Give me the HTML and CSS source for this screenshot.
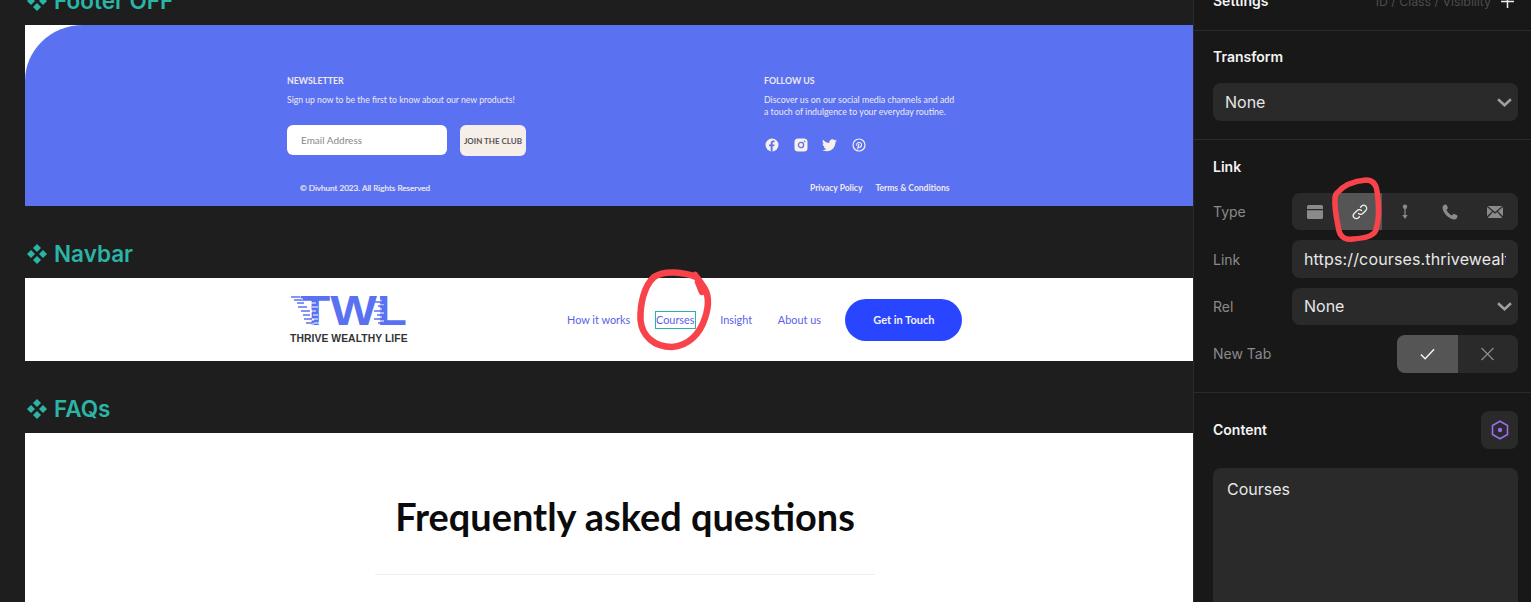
FILE: index.html
```html
<!DOCTYPE html>
<html lang="en">
<head>
<meta charset="utf-8">
<title>Link settings</title>
<link rel="stylesheet" href="styles.css">
</head>
<body>
<div class="app">
  <main class="canvas">
    <section class="block">
      <h2 class="label"><svg class="gem" viewBox="0 0 20 20"><path d="M10 0l4 4-4 4-4-4zM4 6l4 4-4 4-4-4zM16 6l4 4-4 4-4-4zM10 12l4 4-4 4-4-4z"/></svg>Footer OFF</h2>
      <div class="frame footer-frame">
        <div class="footer">
          <div class="foot-grid">
            <div class="foot-col">
              <h4 class="foot-title">NEWSLETTER</h4>
              <p class="foot-text">Sign up now to be the first to know about our new products!</p>
              <div class="sub">
                <div class="email">Email Address</div>
                <div class="join">JOIN THE CLUB</div>
              </div>
              <div class="copy">© Divhunt 2023. All Rights Reserved</div>
            </div>
            <div class="foot-col">
              <h4 class="foot-title">FOLLOW US</h4>
              <p class="foot-text foot-text-wide">Discover us on our social media channels and add<br>a touch of indulgence to your everyday routine.</p>
              <div class="social">
                <svg viewBox="0 0 14 14"><circle cx="7" cy="7" r="6.5" fill="#f8f0ea"/><path d="M7.6 13.4V8.3h1.6l.3-1.9H7.6V5.3c0-.6.3-1 1-1h1V2.700c-.4-.1-.9-.1-1.400-.1-1.500 0-2.500.9-2.500 2.500v1.300H4v1.900h1.700v5.100z" fill="#5a72f2"/></svg>
                <svg viewBox="0 0 14 14"><rect x=".5" y=".5" width="13" height="13" rx="3.500" fill="#f8f0ea"/><circle cx="7" cy="7" r="2.600" fill="none" stroke="#5a72f2" stroke-width="1.300"/><circle cx="10.600" cy="3.400" r=".8" fill="#5a72f2"/></svg>
                <svg class="tw" viewBox="0 0 24 20"><path d="M24 2.400c-.9.400-1.800.7-2.800.8 1-.6 1.800-1.600 2.200-2.700-1 .6-2 1-3.100 1.200C19.300.7 18 0 16.600 0c-2.700 0-4.900 2.200-4.900 4.900 0 .4 0 .8.100 1.100C7.700 5.800 4.100 3.900 1.700.900c-.4.700-.7 1.600-.7 2.500 0 1.700.9 3.200 2.200 4.100-.8 0-1.600-.2-2.200-.6v.1c0 2.400 1.700 4.400 3.900 4.800-.4.100-.8.200-1.300.2-.3 0-.6 0-.9-.1.600 2 2.400 3.400 4.600 3.400-1.700 1.300-3.800 2.100-6.100 2.100-.4 0-.8 0-1.200-.1C2.200 18.300 4.800 19.100 7.500 19.100c9.100 0 14-7.500 14-14v-.6c1-.7 1.800-1.500 2.500-2.100z" fill="#f8f0ea"/></svg>
                <svg viewBox="0 0 14 14"><circle cx="7" cy="7" r="6" fill="none" stroke="#f8f0ea" stroke-width="1.200"/><path d="M5.600 11.500l1.300-5.700M5 7.800c-.8-1.500.2-3.300 2.100-3.300 1.600 0 2.500 1 2.400 2.400-.1 1.500-1 2.400-2 2.400-.5 0-.9-.2-1.100-.6" fill="none" stroke="#f8f0ea" stroke-width="1.100"/></svg>
              </div>
              <div class="legal"><span>Privacy Policy</span><span>Terms &amp; Conditions</span></div>
            </div>
          </div>
        </div>
      </div>
    </section>

    <section class="block">
      <h2 class="label"><svg class="gem" viewBox="0 0 20 20"><path d="M10 0l4 4-4 4-4-4zM4 6l4 4-4 4-4-4zM16 6l4 4-4 4-4-4zM10 12l4 4-4 4-4-4z"/></svg>Navbar</h2>
      <div class="frame nav-frame">
        <div class="logo">
          <svg class="logo-mark" viewBox="0 0 117 32">
            <text x="10" y="29" class="logo-letters" textLength="107" lengthAdjust="spacingAndGlyphs">TWL</text>
            <g class="streaks-white">
              <path d="M8 3h5M8 6h3M8 9h8M8 12h12M8 16h14M8 20h14M8 24h16M8 28h16M21 7h5M22 11h6M20 15h6M23 19h5M22 23h6M24 27h5M89 5h3M89 9h5M89 13h3M89 17h5M89 21h3M89 25h5"/>
            </g>
            <g class="streaks-blue">
              <path d="M1 1h9M4 4h7M7 7h7M8 11h9M11 15h9M13 19h7M14 23h8M16 27h6M90 1h5M85 6h7M88 10h6M84 15h8M87 19h7M84 23h8M88 27h7"/>
            </g>
          </svg>
          <div class="logo-name">THRIVE WEALTHY LIFE</div>
        </div>
        <nav class="links">
          <a class="link">How it works</a>
          <a class="link link-on">Courses</a>
          <a class="link">Insight</a>
          <a class="link">About us</a>
        </nav>
        <div class="touch">Get in Touch</div>
      </div>
    </section>

    <section class="block">
      <h2 class="label"><svg class="gem" viewBox="0 0 20 20"><path d="M10 0l4 4-4 4-4-4zM4 6l4 4-4 4-4-4zM16 6l4 4-4 4-4-4zM10 12l4 4-4 4-4-4z"/></svg>FAQs</h2>
      <div class="frame faq-frame">
        <h1 class="faq-title">Frequently asked questions</h1>
        <div class="faq-rule"></div>
        <div class="faq-q">What is Thrive Wealthy Life?</div>
      </div>
    </section>
  </main>

  <aside class="panel">
    <section class="group group-settings">
      <div class="head-row">
        <h3 class="head">Settings</h3>
        <span class="hint">ID / Class / Visibility</span>
        <svg class="plus" viewBox="0 0 14 14"><path d="M7 0v14M0 7h14"/></svg>
      </div>
    </section>
    <section class="group group-transform">
      <h3 class="head">Transform</h3>
      <div class="field select wide"><span>None</span><svg class="chev" viewBox="0 0 14 8"><path d="M1 1l6 5.500L13 1"/></svg></div>
    </section>
    <section class="group group-link">
      <h3 class="head">Link</h3>
      <div class="rows">
        <div class="row">
          <span class="row-name">Type</span>
          <div class="field types">
            <span class="type"><svg viewBox="0 0 16 14"><path d="M1.500 0h13A1.500 1.500 0 0 1 16 1.500V4H0V1.500A1.500 1.500 0 0 1 1.500 0zM0 5.200h16v7.300a1.500 1.500 0 0 1-1.500 1.500h-13A1.500 1.500 0 0 1 0 12.500z" fill="#8a8a8a"/></svg></span>
            <span class="type type-on"><svg viewBox="0 0 16 16"><path d="M6.500 9.500a3 3 0 0 0 4.300 0l3-3a3 3 0 0 0-4.300-4.300l-1 1M9.500 6.500a3 3 0 0 0-4.300 0l-3 3a3 3 0 0 0 4.300 4.300l1-1" fill="none" stroke="#f0f0f0" stroke-width="1.300" stroke-linecap="round"/></svg></span>
            <span class="type"><svg viewBox="0 0 8 18"><circle cx="4" cy="3" r="2.500" fill="#8a8a8a"/><path d="M4 3v11" stroke="#8a8a8a" stroke-width="1.400"/><path d="M1 12.500h6L4 17z" fill="#8a8a8a"/></svg></span>
            <span class="type"><svg viewBox="0 0 16 16"><path d="M3.600.500c.5 0 1 .3 1.200.8l1 2.300c.2.500.1 1-.3 1.400L4.400 5.800c.7 2 3.300 4.800 5.500 5.700l1.100-1.200c.4-.4 1-.5 1.400-.3l2.300 1c.5.200.8.700.8 1.200 0 1.500-1.400 3.300-3 3.300C7 15.500.500 8.500.500 3.500.500 2 2 .500 3.600.500z" fill="#8a8a8a"/></svg></span>
            <span class="type"><svg viewBox="0 0 17 13"><path d="M.800 0h15.400L8.500 6.500zM0 1.200l5.400 4.500L0 11zM17 1.200v9.800l-5.400-5.300zM6.300 6.500l2.200 1.800 2.200-1.800 5.700 6.500H.600z" fill="#8a8a8a"/></svg></span>
          </div>
        </div>
        <div class="row">
          <span class="row-name">Link</span>
          <div class="field url"><span class="url-text">https://courses.thrivewealthylife.com</span></div>
        </div>
        <div class="row">
          <span class="row-name">Rel</span>
          <div class="field select rel"><span>None</span><svg class="chev" viewBox="0 0 14 8"><path d="M1 1l6 5.500L13 1"/></svg></div>
        </div>
        <div class="row">
          <span class="row-name">New Tab</span>
          <div class="field toggle">
            <span class="tog tog-on"><svg viewBox="0 0 16 12"><path d="M1 6.500L5.500 11 15 1" fill="none" stroke="#f5f5f5" stroke-width="1.600"/></svg></span>
            <span class="tog"><svg viewBox="0 0 14 14"><path d="M1 1l12 12M13 1L1 13" fill="none" stroke="#8a8a8a" stroke-width="1.300"/></svg></span>
          </div>
        </div>
      </div>
    </section>
    <section class="group group-content">
      <div class="content-row">
        <h3 class="head">Content</h3>
        <span class="hex"><svg viewBox="0 0 18 20"><path d="M9 1.200l7.500 4.300v9L9 18.800l-7.500-4.300v-9z" fill="none" stroke="#9a6cf0" stroke-width="1.600"/><circle cx="9" cy="10" r="2.200" fill="#9a6cf0"/></svg></span>
      </div>
      <div class="text-area">Courses</div>
    </section>
  </aside>

  <svg class="scribble scribble-nav" viewBox="630 260 90 100"><path d="M696 277C684 272 664 270 654 277C644 286 640 304 640.500 320C642 336 654 347 672 347C688 346 700 334 705 318C709 306 709 294 703 286C701 283 698 279 695 275M698 282L702 292"/></svg>
  <svg class="scribble scribble-type" viewBox="1325 170 65 80"><path d="M1337 193C1343 186 1354 181 1366 180C1373 180 1376 184 1377 191C1379 204 1379 220 1376 230C1373 237 1364 238 1353 239C1347 240 1341 238 1339 231C1337 220 1334 208 1335 199C1335 196 1336 194 1337 193"/></svg>
</div>
</body>
</html>
```
FILE: styles.css
```css
* { box-sizing: border-box; }
html, body { margin: 0; height: 602px; overflow: hidden; background: #1e1e1e; }
body { font-family: "Inter", "Liberation Sans", sans-serif; }
h1, h2, h3, h4, p { margin: 0; }

.app { position: relative; display: flex; width: 1531px; height: 602px; overflow: hidden; }

/* canvas */
.canvas {
  flex: 0 0 1193px;
  height: 602px;
  padding-left: 25px;
  margin-top: -14px;
  overflow: visible;
}
.block { margin-bottom: 33px; }
.label {
  display: flex;
  align-items: center;
  gap: 7px;
  height: 30px;
  margin-bottom: 9px;
  font-size: 22.500px;
  font-weight: 600;
  line-height: 30px;
  color: #2bb5a6;
}
.gem { width: 20px; height: 20px; margin-left: 2px; fill: #2bb5a6; }
.frame { width: 1168px; background: #fff; font-family: "Lato", "Noto Sans", sans-serif; }

/* footer */
.footer-frame { height: 181px; }
.footer { height: 100%; padding: 50px 0 0 262px; background: #5a72f2; border-top-left-radius: 58px 56px; color: #f0e9ec; }
.foot-grid { display: grid; grid-template-columns: 477px 210px; }
.foot-title { font-size: 8.800px; font-weight: 700; line-height: 12px; margin-bottom: 7px; }
.foot-text { font-size: 8.650px; line-height: 12px; font-weight: 400; white-space: nowrap; }
.foot-text-wide { font-size: 8.800px; }
.sub { display: flex; gap: 13px; margin-top: 19px; }
.email { width: 160px; height: 30px; padding-left: 14px; background: #fff; border-radius: 6px; color: #888; font-size: 10px; line-height: 31px; }
.join { width: 66px; height: 31px; background: #f6eee8; border-radius: 6px; color: #555; font-size: 8px; font-weight: 700; line-height: 33px; text-align: center; white-space: nowrap; }
.copy { margin: 26px 0 0 13px; font-size: 8.100px; font-weight: 400; line-height: 12px; -webkit-text-stroke: .2px #f0e9ec; white-space: nowrap; }
.social { display: flex; align-items: center; gap: 14.700px; margin: 20px 0 0 1px; height: 14px; }
.social svg { width: 14px; height: 14px; }
.social .tw { width: 15px; height: 13px; }
.legal { display: flex; gap: 13px; margin: 30px 0 0 46px; font-size: 8.500px; font-weight: 700; line-height: 12px; white-space: nowrap; }

/* navbar */
.nav-frame { display: flex; align-items: center; height: 82.500px; padding: 1px 0 0 265px; }
.logo { width: 118px; margin-right: 159px; padding-top: 1px; }
.logo-mark { display: block; width: 117px; height: 32px; margin-bottom: 5px; overflow: visible; }
.logo-letters { font-family: "Liberation Sans", sans-serif; font-weight: 700; font-size: 43px; fill: #5a72f2; }
.streaks-blue path { stroke: #5a72f2; stroke-width: 1.500; fill: none; }
.streaks-white path { stroke: #fff; stroke-width: 1.200; fill: none; }
.logo-name { font-family: "Liberation Sans", sans-serif; font-size: 10.300px; font-weight: 700; line-height: 11px; color: #333; white-space: nowrap; letter-spacing: .1px; }
.links { display: flex; align-items: center; gap: 25.700px; }
.link { font-size: 10.900px; line-height: 16px; color: #5a62e8; white-space: nowrap; }
.link-on { outline: 1px solid #2bb5a6; }
.touch { width: 117px; height: 42px; margin-left: 24.300px; border-radius: 21px; background: #2a45ff; color: #f2f2f2; font-size: 11px; font-weight: 700; line-height: 42px; text-align: center; }

/* faq */
.faq-frame { height: 200px; padding: 60px 0 0 350px; }
.faq-title { width: 500px; font-size: 37.900px; font-weight: 700; line-height: 48px; color: #0b0b0b; text-align: center; white-space: nowrap; }
.faq-rule { width: 500px; height: 1px; margin-top: 33px; background: #efefef; }
.faq-q { margin-top: 22px; padding-left: 6px; font-size: 16px; line-height: 24px; color: #222; }

/* panel */
.panel { flex: 0 0 338px; height: 602px; background: #181818; border-left: 1px solid #2a2a2a; color: #fff; }
.group { padding: 0 13px 0 19px; border-bottom: 1px solid #2b2b2b; }
.group-settings { height: 31px; }
.head-row { display: flex; align-items: center; height: 2px; }
.head { font-size: 14px; font-weight: 600; line-height: 20px; color: #f4f4f4; }
.hint { margin-left: auto; font-size: 12.300px; color: #4c4c4c; white-space: nowrap; }
.plus { width: 13px; height: 13px; margin: 0 4px 0 10px; fill: none; stroke: #eee; stroke-width: 1.600; }
.group-transform { height: 109px; padding-top: 16px; }
.field { display: flex; align-items: center; background: #2a2a2a; border-radius: 8px; }
.select { justify-content: space-between; padding: 0 6px 0 12px; font-size: 16px; color: #e6e6e6; }
.wide { height: 38px; margin-top: 16px; }
.chev { width: 15px; height: 9px; fill: none; stroke: #a0a0a0; stroke-width: 2.400; }
.group-link { height: 253px; padding-top: 17px; }
.rows { display: flex; flex-direction: column; gap: 10px; margin-top: 16px; }
.row { display: flex; align-items: center; justify-content: space-between; height: 37.400px; }
.row-name { font-size: 14px; color: #8a8a8a; }
.types { width: 226px; height: 37px; justify-content: space-between; }
.type { display: flex; align-items: center; justify-content: center; width: 45.200px; height: 37px; }
.type svg { width: 16px; height: 16px; }
.type-on { background: #555; }
.url { width: 226px; height: 38px; padding: 0 12px; overflow: hidden; }
.url-text { display: block; width: 100%; overflow: hidden; white-space: nowrap; font-size: 16px; letter-spacing: .15px; color: #e8e8e8; }
.rel { width: 226px; height: 37px; }
.toggle { width: 121px; height: 38px; }
.tog { display: flex; align-items: center; justify-content: center; width: 60.500px; height: 38px; }
.tog svg { width: 15px; height: 14px; }
.tog-on { background: #555; border-radius: 8px 0 0 8px; }
.group-content { border-bottom: 0; padding-top: 18px; }
.content-row { display: flex; align-items: center; justify-content: space-between; height: 38px; }
.hex { display: flex; align-items: center; justify-content: center; width: 37px; height: 38px; background: #2a2a2a; border-radius: 8px; }
.hex svg { width: 18px; height: 20px; }
.text-area { height: 200px; margin-top: 19px; padding: 11px 14px; background: #2a2a2a; border-radius: 8px; font-size: 16px; line-height: 20px; color: #e8e8e8; }

/* hand-drawn marks over the screenshot */
.scribble { position: absolute; fill: none; stroke: #f9434a; stroke-linecap: round; stroke-linejoin: round; }
.scribble-nav { left: 630px; top: 260px; width: 90px; height: 100px; stroke-width: 6.500; }
.scribble-type { left: 1325px; top: 170px; width: 65px; height: 80px; stroke-width: 5.500; }
```
